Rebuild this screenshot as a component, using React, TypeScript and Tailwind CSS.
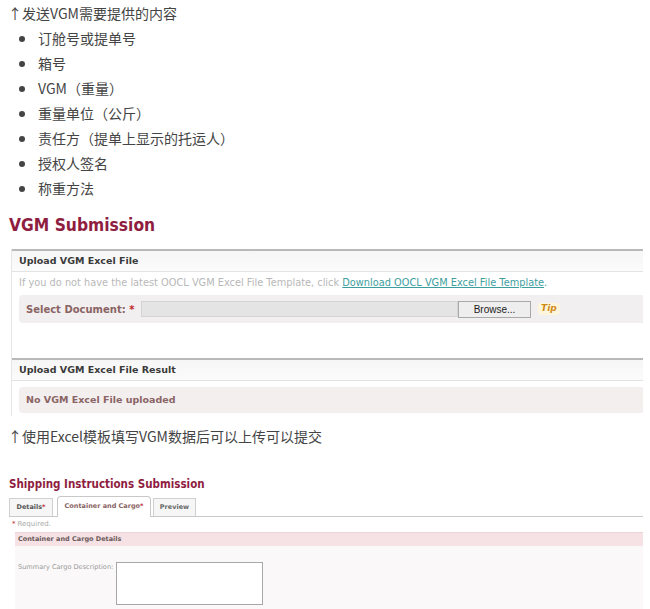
import React from "react";

const cjk = { fontFamily: '"Noto Sans CJK SC", "Noto Sans", sans-serif' };
const ui = { fontFamily: '"DejaVu Sans", Verdana, sans-serif' };
const uiCond = { fontFamily: '"DejaVu Sans Condensed", "DejaVu Sans", Tahoma, sans-serif' };

const items = [
  "订舱号或提单号",
  "箱号",
  "VGM（重量）",
  "重量单位（公斤）",
  "责任方（提单上显示的托运人）",
  "授权人签名",
  "称重方法",
];

function PanelHeader({ title }: { title: string }) {
  return (
    <div className="border-t-2 border-[#b9b9b9]">
      <div
        className="h-[21px] flex items-center pl-[7px] bg-gradient-to-b from-[#f6f6f6] to-[#fbfbfb] border-b border-[#e3e3e3] text-[9.5px] font-bold text-[#3a3a3a]"
        style={ui}
      >
        {title}
      </div>
    </div>
  );
}

export default function App() {
  return (
    <div className="w-[650px] h-[609px] bg-white overflow-hidden">
      <div className="pl-[8px] pt-[3px]" style={cjk}>
        <div className="h-[20px] leading-[20px] text-[14px] text-[#444]">↑发送VGM需要提供的内容</div>
        <ul className="mt-[3px]">
          {items.map((t) => (
            <li key={t} className="h-[25px] flex items-center text-[14px] text-[#444]">
              <span className="w-[6px] h-[6px] rounded-full bg-[#444] ml-[11px] mr-[13px]" />
              {t}
            </li>
          ))}
        </ul>
      </div>

      <div className="pl-[9px] mt-[13px] h-[24px] flex items-center text-[17.3px] font-bold text-[#8f1d3f]" style={uiCond}>
        VGM Submission
      </div>

      <div className="ml-[11px] mr-[7px] mt-[11px] border-l border-[#e6e6e6] h-[167px]" style={ui}>
        <PanelHeader title="Upload VGM Excel File" />
        <div className="h-[23px] flex items-center pl-[7px] text-[9.8px] text-[#b8b8b8] whitespace-nowrap">
          If you do not have the latest OOCL VGM Excel File Template, click&nbsp;
          <span className="text-[#3d9ea0] underline">Download OOCL VGM Excel File Template</span>
          <span className="text-[#3d9ea0]">.</span>
        </div>
        <div className="ml-[7px] h-[28px] bg-[#f1efef] rounded-l flex items-center">
          <span className="pl-[7px] w-[122px] text-[10px] font-bold text-[#8a6464] whitespace-nowrap">
            Select Document: <span className="text-[#c0262c]">*</span>
          </span>
          <div className="w-[317px] h-[16px] bg-[#e4e4e4] border border-[#d4d4d4]" />
          <div
            className="w-[73px] h-[17px] bg-[#eeeeee] border border-[#a9a9a9] flex items-center justify-center text-[10px] text-[#222]"
            style={{ fontFamily: '"Liberation Sans", Arial, sans-serif' }}
          >
            Browse...
          </div>
          <div className="ml-[7px] h-[12px] px-[3px] bg-[#fdf6dc] rounded-sm flex items-center text-[9px] font-bold italic text-[#d08a1a]">
            Tip
          </div>
        </div>
        <div className="h-[35px]" />
        <PanelHeader title="Upload VGM Excel File Result" />
        <div className="ml-[7px] mt-[6px] h-[26px] bg-[#f3efef] rounded-l flex items-center pl-[7px] text-[9.5px] font-bold text-[#8a6464]">
          No VGM Excel File uploaded
        </div>
      </div>

      <div className="pl-[8px] mt-[10px] h-[20px] leading-[20px] text-[14px] text-[#444]" style={cjk}>
        ↑使用Excel模板填写VGM数据后可以上传可以提交
      </div>

      <div className="pl-[9px] mt-[30px] h-[18px] flex items-center text-[11.5px] font-bold text-[#8f1d3f]" style={uiCond}>
        Shipping Instructions Submission
      </div>

      <div className="mt-[2px] ml-[9px] mr-[7px]" style={ui}>
        <div className="flex items-end h-[21px] border-b border-[#c9c9c9]">
          <div className="w-[44px] h-[18px] border border-b-0 border-[#d0d0d0] bg-[#f6f6f6] flex items-center justify-center text-[6.5px] font-bold text-[#555]">
            Details<span className="text-[#c0262c]">*</span>
          </div>
          <div className="ml-[4px] w-[94px] h-[21px] border border-b-0 border-[#c8c8c8] rounded-t bg-white flex items-center justify-center text-[6.5px] font-bold text-[#8a6464] -mb-px">
            Container and Cargo<span className="text-[#c0262c]">*</span>
          </div>
          <div className="ml-[2px] w-[43px] h-[18px] border border-b-0 border-[#d0d0d0] bg-[#f6f6f6] flex items-center justify-center text-[6.5px] font-bold text-[#666]">
            Preview
          </div>
        </div>
        <div className="h-[15px] flex items-center pl-[3px] text-[7px] text-[#aaa]">
          <span className="text-[#c0262c] mr-[2px]">*</span>Required.
        </div>
        <div className="ml-[6px] h-[14px] bg-[#f6e1e4] border-t border-[#ecd3d7] flex items-center pl-[3px] text-[6.5px] font-bold text-[#6a5a5a]">
          Container and Cargo Details
        </div>
        <div className="ml-[6px] h-[80px] bg-[#faf8f8] flex items-start pt-[16px] pl-[3px]">
          <span className="w-[98px] text-[6.6px] text-[#999] whitespace-nowrap pt-[1px]">Summary Cargo Description:</span>
          <div className="w-[147px] h-[43px] bg-white border border-[#a8a8a8]" />
        </div>
      </div>
    </div>
  );
}
